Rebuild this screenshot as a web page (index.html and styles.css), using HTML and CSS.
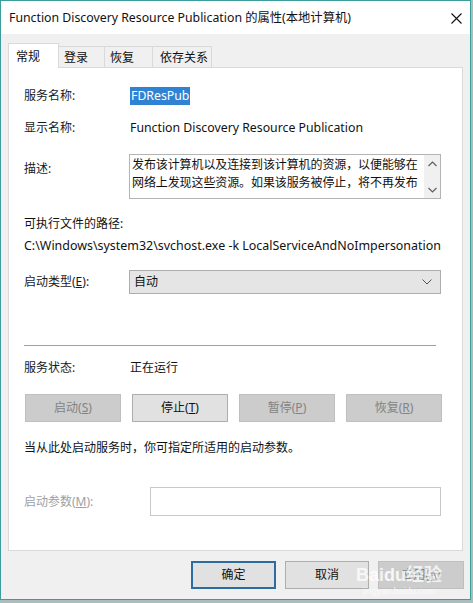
FILE: index.html
```html
<!DOCTYPE html>
<html lang="zh-CN">
<head>
<meta charset="utf-8">
<title>Function Discovery Resource Publication 的属性</title>
<link rel="stylesheet" href="styles.css">
</head>
<body>
<div class="window">
  <div class="titlebar">
    <span class="title">Function Discovery Resource Publication 的属性(本地计算机)</span>
    <svg class="close" width="11" height="11" viewBox="0 0 11 11"><path d="M0.5 0.5 L10.5 10.5 M10.5 0.5 L0.5 10.5" stroke="#111" stroke-width="1.1" fill="none"/></svg>
  </div>
  <div class="client">
    <div class="tabs">
      <div class="tab active">常规</div>
      <div class="tab t2">登录</div>
      <div class="tab t3">恢复</div>
      <div class="tab t4">依存关系</div>
    </div>
    <div class="panel">
      <div class="row r-name">
        <span class="label">服务名称:</span>
        <span class="selected">FDResPub</span>
      </div>
      <div class="row r-display">
        <span class="label">显示名称:</span>
        <span class="value latin">Function Discovery Resource Publication</span>
      </div>
      <div class="row r-desc">
        <span class="label desc-label">描述:</span>
        <div class="textarea">
          <div class="ta-text">发布该计算机以及连接到该计算机的资源，以便能够在网络上发现这些资源。如果该服务被停止，将不再发布</div>
          <div class="scroll">
            <svg width="9" height="6" viewBox="0 0 9 6"><path d="M0.5 5 L4.5 1 L8.5 5" stroke="#606060" stroke-width="1.2" fill="none"/></svg>
            <svg width="9" height="6" viewBox="0 0 9 6"><path d="M0.5 1 L4.5 5 L8.5 1" stroke="#606060" stroke-width="1.2" fill="none"/></svg>
          </div>
        </div>
      </div>
      <div class="line r-pathlabel">可执行文件的路径:</div>
      <div class="line r-path">C:\Windows\system32\svchost.exe -k LocalServiceAndNoImpersonation</div>
      <div class="row r-type">
        <span class="label">启动类型(<u>E</u>):</span>
        <div class="combo">
          <span>自动</span>
          <svg width="10" height="6" viewBox="0 0 10 6"><path d="M0.5 0.5 L5 5 L9.5 0.5" stroke="#555" stroke-width="1" fill="none"/></svg>
        </div>
      </div>
      <div class="separator"></div>
      <div class="row r-status">
        <span class="label">服务状态:</span>
        <span class="value">正在运行</span>
      </div>
      <div class="buttons">
        <div class="btn disabled">启动(<u>S</u>)</div>
        <div class="btn">停止(<u>T</u>)</div>
        <div class="btn disabled">暂停(<u>P</u>)</div>
        <div class="btn disabled">恢复(<u>R</u>)</div>
      </div>
      <div class="line r-hint">当从此处启动服务时，你可指定所适用的启动参数。</div>
      <div class="row r-param">
        <span class="label param-label">启动参数(<u>M</u>):</span>
        <div class="input"></div>
      </div>
    </div>
    <div class="footer">
      <div class="btn fbtn default">确定</div>
      <div class="btn fbtn cancel">取消</div>
      <div class="btn fbtn apply disabled">应用(<u>A</u>)</div>
    </div>
    <div class="watermark">
      <span class="wm-big">Bai<span class="wm-du">du</span>经验</span>
      <span class="wm-small">jingyan.baidu.com</span>
    </div>
  </div>
</div>
</body>
</html>
```

FILE: styles.css
```css
html, body {
  margin: 0;
  padding: 0;
}
body {
  width: 473px;
  height: 603px;
  background: #a9bfbf;
  font-family: "Noto Sans", "Noto Sans CJK SC", sans-serif;
  font-size: 12px;
  line-height: 16px;
  color: #111;
  overflow: hidden;
}
.window {
  width: 469px;
  height: 598px;
  border: 1px solid #3b9c9c;
  background: #f0f0f0;
  display: flex;
  flex-direction: column;
}
.titlebar {
  height: 33px;
  background: #fff;
  display: flex;
  align-items: center;
  justify-content: space-between;
  padding: 0 8px 0 8px;
  flex-shrink: 0;
}
.title {
  font-size: 12.3px;
  color: #111;
  margin-top: 1px;
}
.close {
  margin-top: 1px;
}
.client {
  position: relative;
  flex: 1;
  padding: 9px 7px 0 7px;
}
.tabs {
  display: flex;
  align-items: flex-end;
  height: 24px;
  position: relative;
  z-index: 1;
}
.tab {
  height: 21px;
  line-height: 21px;
  border: 1px solid #d9d9d9;
  border-bottom: none;
  border-left: none;
  background: #f0f0f0;
  padding-left: 5px;
  box-sizing: border-box;
  color: #111;
}
.tab.active {
  height: 25px;
  line-height: 25px;
  background: #fff;
  border-left: 1px solid #d9d9d9;
  width: 51px;
  padding-left: 7px;
  margin-bottom: -1px;
}
.t2 { width: 46px; }
.t3 { width: 48px; }
.t4 { width: 59px; padding-left: 7px; }
.panel {
  width: 455px;
  height: 484px;
  box-sizing: border-box;
  background: #fff;
  border: 1px solid #d9d9d9;
  padding: 19px 20px 0 15px;
  display: flex;
  flex-direction: column;
}
.row {
  display: flex;
  align-items: center;
}
.label {
  width: 105px;
  flex-shrink: 0;
  color: #1a1a1a;
}
.r-name { height: 18px; }
.selected {
  background: #2f83d2;
  color: #fff;
  height: 18px;
  line-height: 18px;
  padding: 0 1px;
  margin-left: 1px;
  font-size: 12.3px;
}
.r-display { height: 18px; margin-top: 14px; }
.value { margin-left: 1px; }
.latin { font-size: 12.3px; }
.r-desc {
  margin-top: 17px;
  align-items: flex-start;
}
.desc-label { margin-top: 7px; }
.textarea {
  width: 312px;
  height: 45px;
  box-sizing: border-box;
  border: 1px solid #b4b4b4;
  display: flex;
}
.ta-text {
  flex: 1;
  padding: 1px 2px 0 2px;
  line-height: 18px;
  height: 43px;
  overflow: hidden;
  letter-spacing: -0.1px;
}
.scroll {
  width: 16px;
  background: #f0f0f0;
  display: flex;
  flex-direction: column;
  align-items: center;
  justify-content: space-between;
  padding: 6px 0 5px;
  box-sizing: border-box;
}
.line { height: 16px; }
.r-pathlabel { margin-top: 17px; }
.r-path { margin-top: 6px; font-size: 12.45px; }
.r-type { margin-top: 16px; }
.combo {
  width: 312px;
  height: 24px;
  box-sizing: border-box;
  background: #e5e5e5;
  border: 1px solid #adadad;
  display: flex;
  align-items: center;
  justify-content: space-between;
  padding: 0 8px 0 4px;
}
.separator {
  height: 1px;
  background: #a0a0a0;
  margin-top: 51px;
  width: 412px;
}
.r-status { height: 16px; margin-top: 14px; }
.buttons {
  display: flex;
  justify-content: space-between;
  margin-top: 18px;
  padding-left: 1px;
}
.btn {
  height: 28px;
  box-sizing: border-box;
  border: 1px solid #adadad;
  background: #e1e1e1;
  display: flex;
  align-items: center;
  justify-content: center;
  color: #111;
  width: 96px;
}
.btn.disabled {
  background: #cccccc;
  border-color: #bfbfbf;
  color: #838383;
}
.r-hint { margin-top: 18px; }
.r-param { margin-top: 31px; }
.param-label {
  width: 126px;
  color: #a0a0a0;
}
.input {
  width: 291px;
  height: 29px;
  box-sizing: border-box;
  border: 1px solid #c8c8c8;
  background: #fff;
}
.footer {
  display: flex;
  justify-content: flex-end;
  gap: 9px;
  margin-top: 10px;
  margin-right: -1px;
}
.fbtn { height: 28px; }
.default {
  width: 85px;
  border: 2px solid #2b6da3;
}
.cancel { width: 84px; }
.apply { width: 86px; }
.watermark {
  position: absolute;
  left: 355px;
  top: 530px;
  display: flex;
  flex-direction: column;
  align-items: center;
  pointer-events: none;
  color: rgba(255, 255, 255, 0.75);
}
.wm-big {
  font-family: "Liberation Sans", "Noto Sans CJK SC", sans-serif;
  font-size: 18px;
  font-weight: bold;
  line-height: 22px;
}
.wm-du {
  color: rgba(255, 255, 255, 0.85);
}
.wm-small {
  font-family: "Liberation Sans", sans-serif;
  font-size: 9px;
  line-height: 10px;
}
```
